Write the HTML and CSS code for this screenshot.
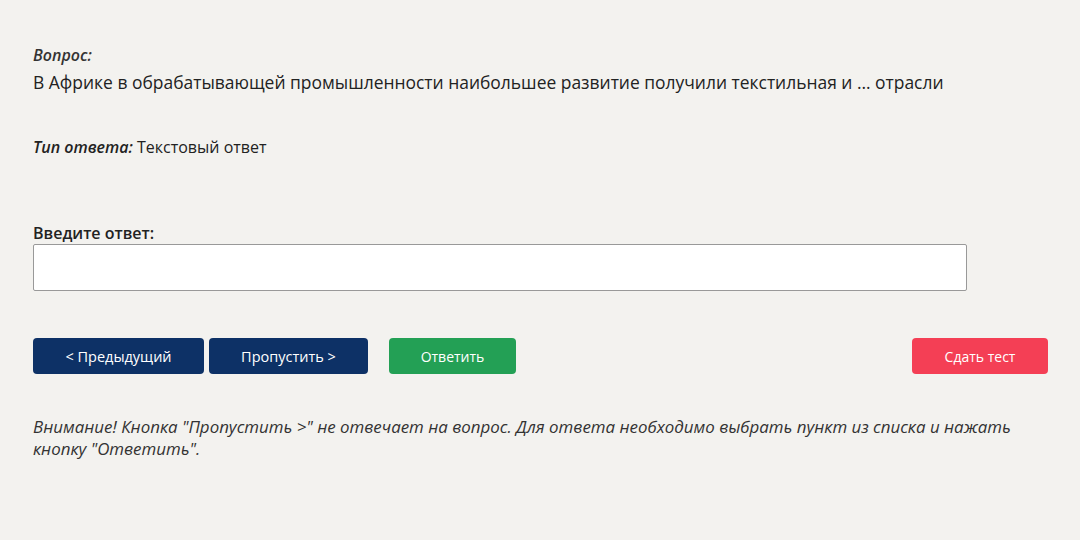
FILE: index.html
```html
<!DOCTYPE html>
<html lang="ru">
<head>
<meta charset="utf-8">
<link rel="stylesheet" href="styles.css">
</head>
<body>
<main class="page">
  <section class="question">
    <div class="label label-q">Вопрос:</div>
    <div class="question-text">В Африке в обрабатывающей промышленности наибольшее развитие получили текстильная и … отрасли</div>
  </section>
  <div class="type"><span class="label">Тип ответа:</span> Текстовый ответ</div>
  <section class="answer">
    <div class="answer-label">Введите ответ:</div>
    <textarea class="answer-input"></textarea>
  </section>
  <div class="buttons">
    <button class="btn btn-nav btn-prev">&lt; Предыдущий</button>
    <button class="btn btn-nav btn-skip">Пропустить &gt;</button>
    <button class="btn btn-answer">Ответить</button>
    <button class="btn btn-finish">Сдать тест</button>
  </div>
  <p class="warning">Внимание! Кнопка "Пропустить &gt;" не отвечает на вопрос. Для ответа необходимо выбрать пункт из списка и нажать кнопку "Ответить".</p>
</main>
</body>
</html>
```

FILE: styles.css
```css
html, body {
  margin: 0;
  padding: 0;
  background: #f3f2ef;
}
body {
  font-family: "Open Sans", "Noto Sans", sans-serif;
  color: #222;
}
.page {
  padding: 43px 32px 0 33px;
}
.label {
  font-style: italic;
  font-weight: 600;
  font-size: 16px;
}
.label-q {
  line-height: 24px;
  color: #333;
}
.question-text {
  font-size: 17.45px;
  line-height: 28px;
  margin-top: 1px;
}
.type {
  margin-top: 39px;
  font-size: 16px;
  line-height: 24px;
}
.answer {
  margin-top: 63px;
}
.answer-label {
  font-weight: 600;
  font-size: 16px;
  line-height: 22px;
}
.answer-input {
  display: block;
  box-sizing: border-box;
  width: 934px;
  height: 47px;
  margin: 0;
  border: 1px solid #999;
  border-radius: 2px;
  background: #fff;
  resize: none;
}
.buttons {
  display: flex;
  margin-top: 47px;
  height: 36px;
}
.btn {
  border: none;
  border-radius: 4px;
  color: #fff;
  font-family: "Open Sans", "Noto Sans", sans-serif;
  font-size: 14.5px;
  height: 36px;
  padding: 0;
}
.btn-nav {
  background: #0d3166;
}
.btn-prev { width: 171px; }
.btn-skip { width: 159px; margin-left: 5px; }
.btn-answer { width: 127px; margin-left: 21px; background: #23a055; font-size: 14px; }
.btn-finish { width: 136px; margin-left: auto; background: #f43f55; font-size: 14px; }
.warning {
  margin: 42px 0 0;
  font-style: italic;
  font-size: 16.9px;
  line-height: 22px;
  color: #333;
}
```
